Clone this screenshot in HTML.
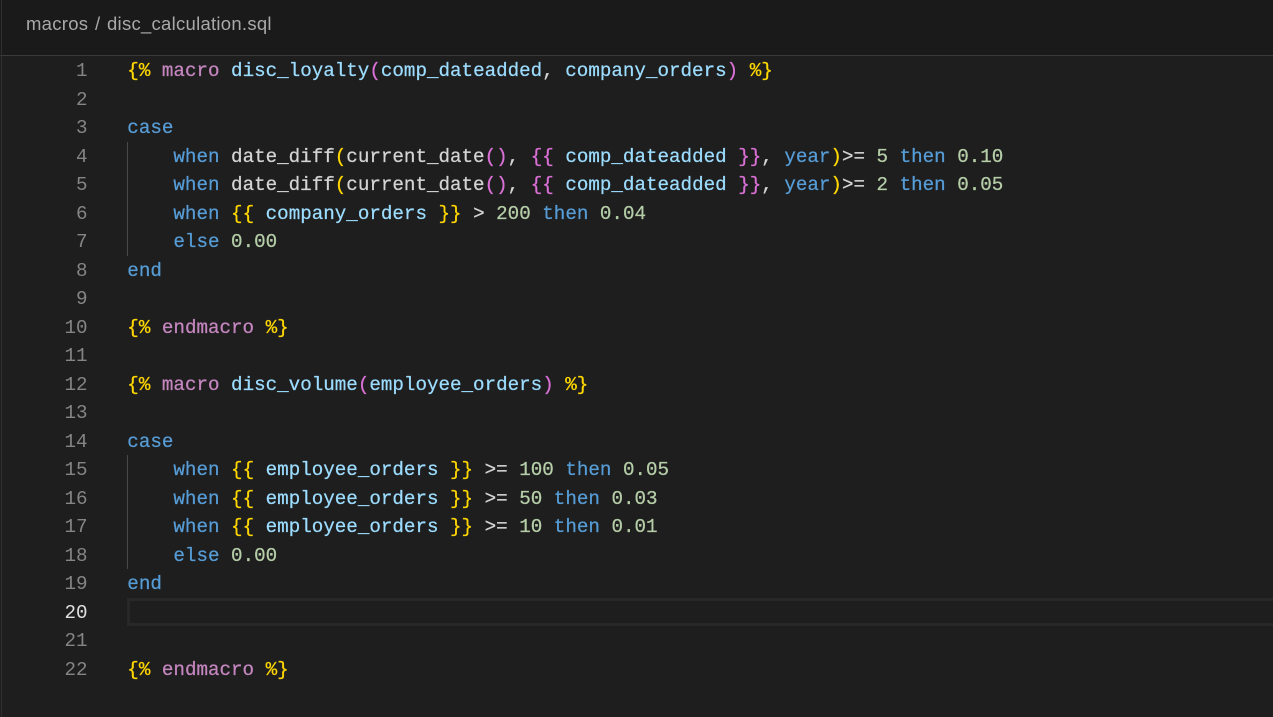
<!DOCTYPE html>
<html><head><meta charset="utf-8">
<style>
html,body{margin:0;padding:0;background:#1e1e1e;}
body{width:1273px;height:717px;position:relative;overflow:hidden;}
#head{position:absolute;left:0;top:0;width:1273px;height:55px;background:#1a1a1a;}
#hl{position:absolute;left:0;top:55px;width:1273px;height:1px;background:#3a3a3a;}
#edge{position:absolute;left:1px;top:0;width:1px;height:717px;background:#2f2f2f;}
.crumb{position:absolute;top:13px;font:18.5px/22px "Liberation Sans",sans-serif;color:#a9a9a9;white-space:pre;letter-spacing:.27px;}
.n{position:absolute;left:40px;width:47.5px;text-align:right;font:19.22px/28.52px "Liberation Mono",monospace;color:#858585;height:28.52px;}
.l{position:absolute;left:127.3px;font:19.22px/28.52px "Liberation Mono",monospace;color:#d4d4d4;white-space:pre;height:28.52px;-webkit-text-stroke:.25px currentColor;}
.k{color:#569cd6}.v{color:#9cdcfe}.y{color:#ffd700}.p{color:#da70d6}.m{color:#c586c0}.f{color:#9cdcfe}.d{color:#b5cea8}
.g{position:absolute;left:127px;width:1px;background:#484848;}
#cur{position:absolute;left:127px;top:598px;width:1146px;height:28px;box-sizing:border-box;border:3px solid #282828;border-right:none;}
</style></head><body>
<div id="head"></div><div id="hl"></div><div id="edge"></div>
<div class="crumb" style="left:26px">macros</div>
<div class="crumb" style="left:95px">/</div>
<div class="crumb" style="left:107px">disc_calculation.sql</div>
<div class="g" style="top:142px;height:114px"></div>
<div class="g" style="top:455px;height:114px"></div>
<div id="cur"></div>
<div class="n" style="top:57px">1</div>
<div class="n" style="top:86px">2</div>
<div class="n" style="top:114px">3</div>
<div class="n" style="top:143px">4</div>
<div class="n" style="top:171px">5</div>
<div class="n" style="top:200px">6</div>
<div class="n" style="top:228px">7</div>
<div class="n" style="top:257px">8</div>
<div class="n" style="top:285px">9</div>
<div class="n" style="top:314px">10</div>
<div class="n" style="top:342px">11</div>
<div class="n" style="top:371px">12</div>
<div class="n" style="top:399px">13</div>
<div class="n" style="top:428px">14</div>
<div class="n" style="top:456px">15</div>
<div class="n" style="top:485px">16</div>
<div class="n" style="top:513px">17</div>
<div class="n" style="top:542px">18</div>
<div class="n" style="top:570px">19</div>
<div class="n" style="top:599px;color:#e0e0e0">20</div>
<div class="n" style="top:627px">21</div>
<div class="n" style="top:656px">22</div>

<div class="l" style="top:57px"><span class="y">{%</span> <span class="m">macro</span> <span class="f">disc_loyalty</span><span class="p">(</span><span class="v">comp_dateadded</span>, <span class="v">company_orders</span><span class="p">)</span> <span class="y">%}</span></div>
<div class="l" style="top:114px"><span class="k">case</span></div>
<div class="l" style="top:143px">    <span class="k">when</span> date_diff<span class="y">(</span>current_date<span class="p">()</span>, <span class="p">{{</span> <span class="v">comp_dateadded</span> <span class="p">}}</span>, <span class="k">year</span><span class="y">)</span>&gt;= <span class="d">5</span> <span class="k">then</span> <span class="d">0.10</span></div>
<div class="l" style="top:171px">    <span class="k">when</span> date_diff<span class="y">(</span>current_date<span class="p">()</span>, <span class="p">{{</span> <span class="v">comp_dateadded</span> <span class="p">}}</span>, <span class="k">year</span><span class="y">)</span>&gt;= <span class="d">2</span> <span class="k">then</span> <span class="d">0.05</span></div>
<div class="l" style="top:200px">    <span class="k">when</span> <span class="y">{{</span> <span class="v">company_orders</span> <span class="y">}}</span> &gt; <span class="d">200</span> <span class="k">then</span> <span class="d">0.04</span></div>
<div class="l" style="top:228px">    <span class="k">else</span> <span class="d">0.00</span></div>
<div class="l" style="top:257px"><span class="k">end</span></div>
<div class="l" style="top:314px"><span class="y">{%</span> <span class="m">endmacro</span> <span class="y">%}</span></div>
<div class="l" style="top:371px"><span class="y">{%</span> <span class="m">macro</span> <span class="f">disc_volume</span><span class="p">(</span><span class="v">employee_orders</span><span class="p">)</span> <span class="y">%}</span></div>
<div class="l" style="top:428px"><span class="k">case</span></div>
<div class="l" style="top:456px">    <span class="k">when</span> <span class="y">{{</span> <span class="v">employee_orders</span> <span class="y">}}</span> &gt;= <span class="d">100</span> <span class="k">then</span> <span class="d">0.05</span></div>
<div class="l" style="top:485px">    <span class="k">when</span> <span class="y">{{</span> <span class="v">employee_orders</span> <span class="y">}}</span> &gt;= <span class="d">50</span> <span class="k">then</span> <span class="d">0.03</span></div>
<div class="l" style="top:513px">    <span class="k">when</span> <span class="y">{{</span> <span class="v">employee_orders</span> <span class="y">}}</span> &gt;= <span class="d">10</span> <span class="k">then</span> <span class="d">0.01</span></div>
<div class="l" style="top:542px">    <span class="k">else</span> <span class="d">0.00</span></div>
<div class="l" style="top:570px"><span class="k">end</span></div>
<div class="l" style="top:656px"><span class="y">{%</span> <span class="m">endmacro</span> <span class="y">%}</span></div>
</body></html>
